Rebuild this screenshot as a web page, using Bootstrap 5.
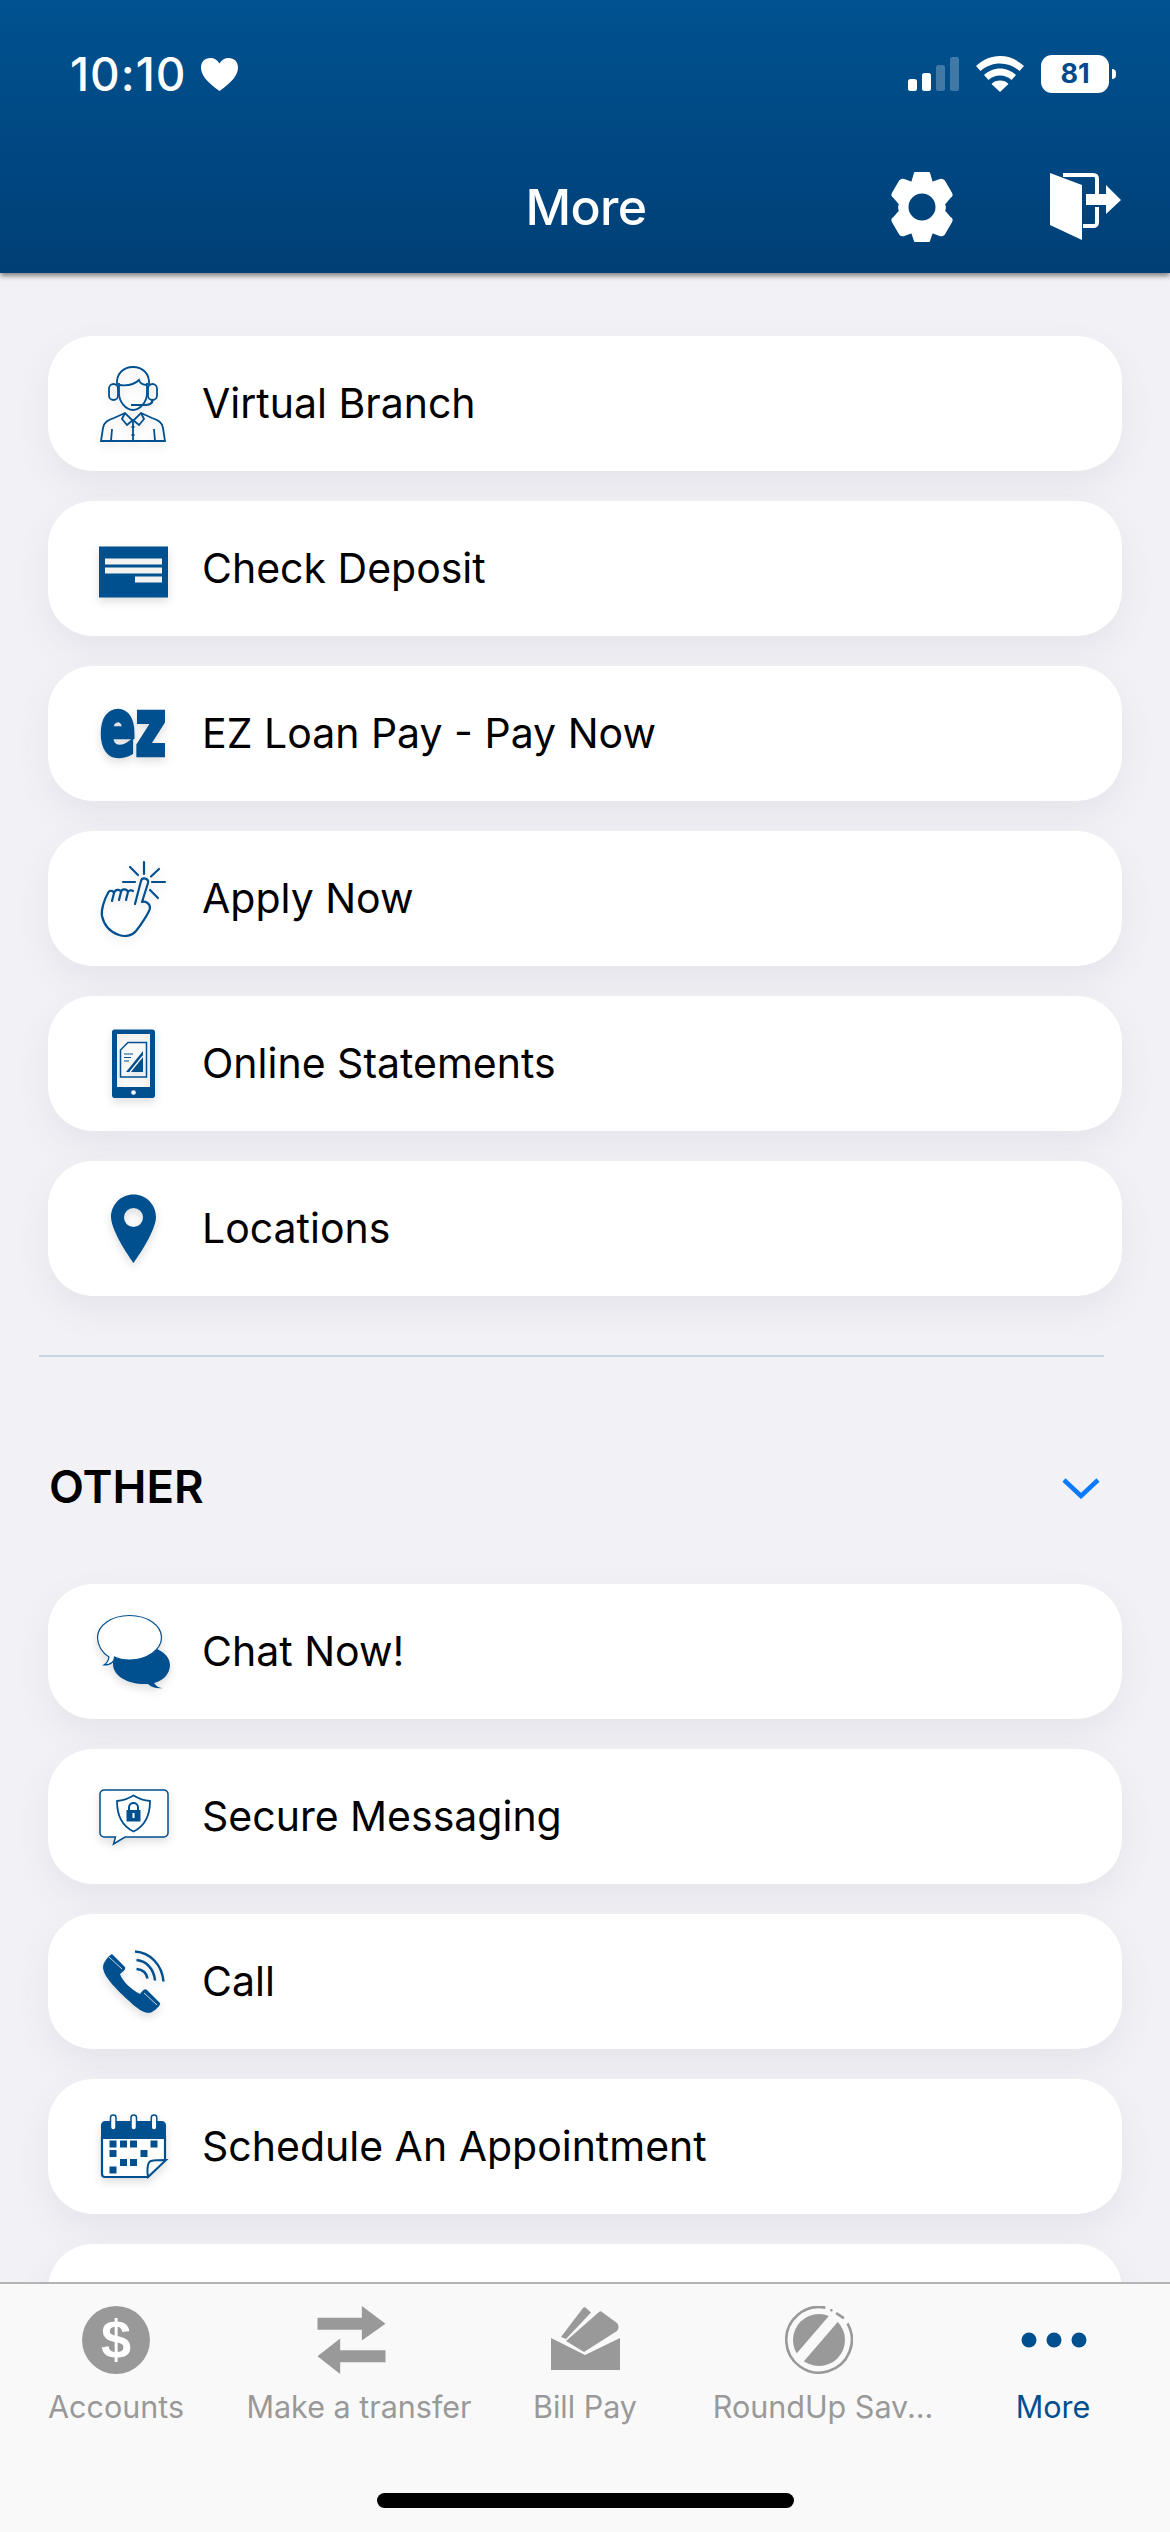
<!DOCTYPE html>
<html lang="en">
<head>
    <meta charset="UTF-8">
    <meta name="viewport" content="width=device-width, initial-scale=1.0">
    <title>More</title>
    <link href="https://cdn.jsdelivr.net/npm/bootstrap@5.3.2/dist/css/bootstrap.min.css" rel="stylesheet">
    <style>
        body {
            background: #f1f1f6;
            font-family: Inter, "Liberation Sans", sans-serif;
        }
        .app-shell {
            width: 1170px;
            height: 2532px;
            overflow: hidden;
        }
        .top-head {
            height: 273px;
            background: linear-gradient(180deg, #005290, #003f76);
            box-shadow: 0 3px 5px rgba(0, 0, 0, .45);
            z-index: 2;
        }
        .status-row {
            height: 148px;
            padding: 0 54px 0 70px;
        }
        .clock-text {
            font-size: 46px;
            font-weight: 500;
            letter-spacing: 1px;
            line-height: 1;
        }
        .heart-icon {
            margin-left: 14px;
        }
        .wifi-icon {
            margin: 0 17px;
        }
        .batt-box {
            width: 68px;
            height: 38px;
            border-radius: 11px;
            background: #fff;
            color: #004b8b;
            font-size: 27px;
            font-weight: 700;
            line-height: 38px;
            text-align: center;
        }
        .batt-nub {
            width: 4px;
            height: 10px;
            margin-left: 3px;
            border-radius: 0 5px 5px 0;
            background: #fff;
        }
        .nav-row {
            height: 120px;
            padding-bottom: 2px;
        }
        .nav-title {
            font-size: 50px;
            font-weight: 500;
            line-height: 1;
            letter-spacing: -.6px;
            margin-left: 2px;
        }
        .head-actions {
            right: 49px;
            top: 24px;
            gap: 96px;
        }
        .scroll-area {
            padding: 63px 48px 0;
            min-height: 0;
        }
        .menu-stack {
            gap: 30px;
        }
        .menu-row {
            height: 135px;
            flex: none;
            padding-left: 47px;
            gap: 31px;
            border-radius: 45px;
            background: #fff;
            box-shadow: 0 14px 34px rgba(90, 90, 120, .08);
            color: #000;
            font-size: 41px;
            text-decoration: none;
        }
        .menu-ico {
            width: 76px;
            height: 76px;
            flex: none;
            color: #00508f;
            overflow: visible;
            filter: drop-shadow(0 4px 4px rgba(0, 0, 0, .13));
        }
        .split-line {
            height: 2px;
            margin: 59px 18px 0 -9px;
            background: #c8d6e3;
        }
        .group-head {
            height: 227px;
            padding: 34px 22px 0 1px;
        }
        .group-title {
            font-size: 45.500px;
            font-weight: 600;
            color: #000;
        }
        .bottom-tabs {
            height: 250px;
            padding-right: 26px;
            background: #f9f9f9;
            border-top: 2px solid #b4b4b4;
            z-index: 2;
        }
        .tab-btn {
            padding-top: 22px;
            color: #999;
            font-size: 30.500px;
        }
        .tab-btn svg {
            display: block;
            margin-bottom: 15px;
        }
        .tab-w1 { width: 232px; }
        .tab-w2 { width: 254px; }
        .tab-w3 { width: 198px; }
        .tab-w4 { width: 278px; }
        .tab-w5 { width: 182px; }
        .tab-btn .tab-ico-left { margin-right: 16px; }
        .tab-btn .tab-ico-nudge { margin-right: 8px; }
        .tab-on { color: #00508f; }
        .tab-label { line-height: 36px; white-space: nowrap; }
        .home-pill {
            left: 377px;
            bottom: 24px;
            width: 417px;
            height: 15px;
            border-radius: 8px;
            background: #000;
        }
    </style>
</head>
<body>
    <div class="app-shell d-flex flex-column">

        <header class="top-head position-relative flex-shrink-0 text-white">
            <div class="status-row d-flex align-items-center">
                <span class="clock-text">10:10</span>
                <svg class="heart-icon" width="37" height="35" viewBox="0 0 39 35"><path fill="#fff" d="M19.500 35C6 25 0 18 0 10 0 4 4 0 10 0c4 0 7.500 2 9.500 6C21.500 2 25 0 29 0c6 0 10 4 10 10 0 8-6 15-19.500 25z"/></svg>
                <div class="ms-auto d-flex align-items-center">
                    <svg width="51" height="34" viewBox="0 0 51 34" fill="#fff">
                        <rect x="0" y="22" width="9" height="12" rx="2.500"/>
                        <rect x="14" y="16" width="9" height="18" rx="2.500"/>
                        <rect x="28" y="8" width="9" height="26" rx="2.500" opacity=".25"/>
                        <rect x="42" y="0" width="9" height="34" rx="2.500" opacity=".25"/>
                    </svg>
                    <svg class="wifi-icon" width="48" height="36" viewBox="0 0 48 36" fill="#fff">
                        <path d="M24 0C15 0 7 3.500 0 10l4.500 5C10 10 17 7.500 24 7.500S38 10 43.500 15L48 10C41 3.500 33 0 24 0z"/>
                        <path d="M24 12.500c-6 0-11.500 2.500-16 6.500l4.500 5c3-3 7-4.500 11.500-4.500s8.500 1.500 11.500 4.500l4.500-5c-4.500-4-10-6.500-16-6.500z"/>
                        <path d="M24 24.500c-3.500 0-6.500 1-8.500 3.500L24 36l8.500-8c-2-2.500-5-3.500-8.500-3.500z"/>
                    </svg>
                    <div class="batt-box">81</div>
                    <div class="batt-nub"></div>
                </div>
            </div>
            <div class="nav-row position-relative d-flex justify-content-center align-items-center">
                <span class="nav-title">More</span>
                <div class="head-actions position-absolute d-flex align-items-center">
                    <svg width="64" height="70" viewBox="0 0 64 70">
                        <path fill="#fff" stroke="#fff" stroke-width="2" stroke-linejoin="round" fill-rule="evenodd" d="M25 1h14l3 10 8-3c2-1 3 0 4 1l7 12c1 2 1 3-1 4l-6 7c1 2 1 5 0 7l6 7c2 1 2 2 1 4l-7 12c-1 1-2 2-4 1l-8-3-3 9H25l-3-9-8 3c-2 1-3 0-4-1L3 50c-1-2-1-3 1-4l6-7c-1-2-1-5 0-7l-6-7c-2-1-2-2-1-4l7-12c1-1 2-2 4-1l8 3zM32 20.500a14.500 14.500 0 1 0 0 29 14.500 14.500 0 0 0 0-29z"/>
                    </svg>
                    <svg width="71" height="68" viewBox="0 0 71 68">
                        <path fill="#fff" d="M0 0l32 12v55L0 52z"/>
                        <path fill="none" stroke="#fff" stroke-width="4" d="M13 2h30c3 0 4 1 4 4v15M47 34v15c0 3-1 4-4 4H33"/>
                        <path fill="#fff" d="M36 21h20v-9l15 15-15 14v-9H36z"/>
                    </svg>
                </div>
            </div>
        </header>

        <main class="scroll-area flex-grow-1 overflow-hidden">
            <div class="menu-stack d-flex flex-column">
                <a class="menu-row d-flex align-items-center" href="#">
                    <svg class="menu-ico" viewBox="0 0 76 76" fill="none" stroke="currentColor" stroke-width="1.800">
                        <path d="M22 19C21 7 29 1 38 1s17 6 16 18"/>
                        <path d="M24 17v10c0 9 7 17 14 17s14-8 14-17V17"/>
                        <path d="M24 19c8 1 15 0 20-5 1 3 4 5 8 5"/>
                        <rect x="14" y="18" width="9" height="16" rx="4.500"/>
                        <rect x="53" y="18" width="9" height="16" rx="4.500"/>
                        <path d="M57.500 34c0 3-3 5-8 5H36" stroke-width="2.200"/>
                        <path d="M6 75l2-13c1-6 5-8 11-10l11-5 8 8 8-8 11 5c6 2 10 4 11 10l2 13z"/>
                        <path d="M30 47l-3 6 5 6 6-5 6 5 5-6-3-6"/>
                        <path d="M38 55v20M17 63l-1 12M59 63l1 12"/>
                        <path d="M38 60v2M38 68v2" stroke-width="3"/>
                    </svg>
                    <span>Virtual Branch</span>
                </a>
                <a class="menu-row d-flex align-items-center" href="#">
                    <svg class="menu-ico" viewBox="0 0 76 76">
                        <rect x="4" y="15.500" width="69" height="51" fill="currentColor"/>
                        <rect x="10" y="27.500" width="57" height="6" fill="#f2f2f2"/>
                        <rect x="10" y="36.500" width="57" height="6" fill="#f2f2f2"/>
                        <rect x="40" y="45.500" width="27" height="6" fill="#f2f2f2"/>
                    </svg>
                    <span>Check Deposit</span>
                </a>
                <a class="menu-row d-flex align-items-center" href="#">
                    <svg class="menu-ico" viewBox="0 0 76 76">
                        <text x="5" y="59" font-family="DejaVu Sans" font-weight="700" font-size="78" fill="currentColor" stroke="currentColor" stroke-width="4.500" textLength="66" lengthAdjust="spacingAndGlyphs">ez</text>
                    </svg>
                    <span>EZ Loan Pay - Pay Now</span>
                </a>
                <a class="menu-row d-flex align-items-center" href="#">
                    <svg class="menu-ico" viewBox="0 0 76 76" fill="none" stroke="currentColor" stroke-width="2.200" stroke-linecap="round" stroke-linejoin="round">
                        <path d="M49 1v12M28 21h12M57 21h13M35 6l8 8M64 8l-8 7.500M63 37l-8-8"/>
                        <path d="M40 43l6-23c1-4 8-3 7 2l-6 19c3-1 8 1 8 6 0 3-9 17-14 23-4 5-11 6-17 4C15 71 9 64 7 55c-1-6 2-16 6-23 1-3 5-3 6 0l-2 8"/>
                        <path d="M19 32c1-4 6-4 7-1l-2 8M26 31c1-4 6-3 7 0l-2 8M33 31c1-2 4-2 5-1"/>
                    </svg>
                    <span>Apply Now</span>
                </a>
                <a class="menu-row d-flex align-items-center" href="#">
                    <svg class="menu-ico" viewBox="0 0 76 76">
                        <path fill="currentColor" fill-rule="evenodd" d="M19.500 3.500h38c1.500 0 2.500 1 2.500 2.500v63.500c0 1.500-1 2.500-2.500 2.500h-38c-1.500 0-2.500-1-2.500-2.500V6c0-1.500 1-2.500 2.500-2.500zM22 8v53h33V8z"/>
                        <circle cx="38.500" cy="66.500" r="2.300" fill="#fff"/>
                        <path fill="none" stroke="currentColor" stroke-width="1.500" d="M33 16.500h18.500v34.500H25.500V24z"/>
                        <path fill="currentColor" d="M31 46l17-21v21z"/>
                        <path stroke="#fff" stroke-width="1.200" d="M35 46l13-16"/>
                        <path stroke="currentColor" stroke-width="1.200" d="M29 28h9M29 31.500h7M29 35h5"/>
                    </svg>
                    <span>Online Statements</span>
                </a>
                <a class="menu-row d-flex align-items-center" href="#">
                    <svg class="menu-ico" viewBox="0 0 76 76">
                        <path fill="currentColor" fill-rule="evenodd" d="M38.500 3.500C26 3.500 16 13.500 16 26c0 15 22.500 46 22.500 46S61 41 61 26C61 13.500 51 3.500 38.500 3.500zm0 13.500a9.500 9.500 0 1 1 0 19 9.500 9.500 0 0 1 0-19z"/>
                    </svg>
                    <span>Locations</span>
                </a>
            </div>

            <div class="split-line"></div>

            <div class="group-head d-flex align-items-center justify-content-between">
                <span class="group-title">OTHER</span>
                <svg width="38" height="22" viewBox="0 0 38 22"><path fill="none" stroke="#0a7aff" stroke-width="4.500" d="M2 3l17 16L36 3"/></svg>
            </div>

            <div class="menu-stack d-flex flex-column">
                <a class="menu-row d-flex align-items-center" href="#">
                    <svg class="menu-ico" viewBox="0 0 76 76">
                        <path fill="currentColor" d="M18 50c0-10 12-18 28-18s29 8 29 19c0 9-7 16-16 18 2 3 5 5 9 5-5 1-11 0-15-4-20 1-35-8-35-20z"/>
                        <path fill="#fff" stroke="currentColor" stroke-width="1.200" d="M2.500 23.500c0-12 14-22 32-22s32 10 32 22-14 22.500-32 22.500c-6 0-11-1-15-3 0 4-3 8-10.500 8 3-2 4.500-4 5-8-7-4-11.500-12-11.500-19.500z"/>
                    </svg>
                    <span>Chat Now!</span>
                </a>
                <a class="menu-row d-flex align-items-center" href="#">
                    <svg class="menu-ico" viewBox="0 0 76 76">
                        <path fill="#fff" stroke="currentColor" stroke-width="1.500" d="M9 11h60c2 0 4 2 4 4v39c0 2-2 4-4 4H30l-11.500 7 2-7H9c-2 0-4-2-4-4V15c0-2 2-4 4-4z"/>
                        <path fill="none" stroke="currentColor" stroke-width="1.800" d="M38.500 16.500c5 3 10 5 16.500 5.500 0 14-5 25-16.500 30.500C27 47 22 36 22 22c6.500-.5 11.500-2.500 16.500-5.500z"/>
                        <path fill="currentColor" d="M31.500 31h14v11.500h-14z"/>
                        <path fill="none" stroke="currentColor" stroke-width="2" d="M34 31v-2.500c0-6 9-6 9 0V31"/>
                        <path stroke="#fff" stroke-width="2" d="M38.500 34v5"/>
                    </svg>
                    <span>Secure Messaging</span>
                </a>
                <a class="menu-row d-flex align-items-center" href="#">
                    <svg class="menu-ico" viewBox="0 0 76 76">
                        <path fill="currentColor" d="M17 10l13 13c1 2-1 4-5 7 2 6 10 15 20 20 3-4 5-6 7-4l13 13c1 2-4 7-8 9-5 3-14-2-24-12C21 45 8 32 8 23c0-4 5-11 9-13z"/>
                        <path stroke="#fff" stroke-width=".8" d="M14 13l13 12M49 49l13 12"/>
                        <path fill="none" stroke="currentColor" stroke-width="2.500" d="M40 7.500c15 1 27 13 28.500 30M41.500 16c10 1 17.500 9 18.500 20.500M41.500 25c6 .5 10 4 11 9.500"/>
                    </svg>
                    <span>Call</span>
                </a>
                <a class="menu-row d-flex align-items-center" href="#">
                    <svg class="menu-ico" viewBox="0 0 76 76">
                        <path fill="#fff" stroke="currentColor" stroke-width="2.200" d="M7 28v37c0 2 1 3 3 3h43l17-17V28z"/>
                        <path fill="currentColor" d="M6 30V16c0-2 2-4 4-4h57c2 0 4 2 4 4v14z"/>
                        <g fill="#fff" stroke="currentColor" stroke-width="1.500">
                            <rect x="15.500" y="6" width="5.500" height="15" rx="2.700"/>
                            <rect x="36" y="6" width="5.500" height="15" rx="2.700"/>
                            <rect x="56.300" y="6" width="5.500" height="15" rx="2.700"/>
                        </g>
                        <g fill="currentColor">
                            <rect x="14.500" y="31.500" width="7" height="7"/>
                            <rect x="25" y="31.500" width="7" height="7"/>
                            <rect x="35" y="31.500" width="7" height="7"/>
                            <rect x="55.500" y="31.500" width="7" height="7"/>
                            <rect x="14.500" y="41" width="7" height="7"/>
                            <rect x="45.500" y="41" width="7" height="7"/>
                            <rect x="25" y="50" width="7" height="7"/>
                            <rect x="35" y="50" width="7" height="7"/>
                            <rect x="14.500" y="57.500" width="7" height="7"/>
                        </g>
                        <path fill="#fff" stroke="currentColor" stroke-width="2" d="M53 68c-1-6-1-15 3-16 4-1 10-1 15-1z"/>
                    </svg>
                    <span>Schedule An Appointment</span>
                </a>
                <a class="menu-row d-flex align-items-center" href="#"></a>
            </div>
        </main>

        <nav class="bottom-tabs position-relative flex-shrink-0 d-flex">
            <div class="tab-btn tab-w1 d-flex flex-column align-items-center">
                <svg width="68" height="68" viewBox="0 0 68 68">
                    <circle cx="34" cy="34" r="34" fill="#999"/>
                    <text x="34" y="52" text-anchor="middle" font-family="Liberation Sans" font-weight="700" font-size="54" fill="#fff">$</text>
                </svg>
                <span class="tab-label">Accounts</span>
            </div>
            <div class="tab-btn tab-w2 d-flex flex-column align-items-center">
                <svg class="tab-ico-left" width="69" height="68" viewBox="0 0 69 69">
                    <path fill="#999" d="M0 12h45V0l24 18-24 17V24H0zM69 45H23V33L0 51l23 18V57h46z"/>
                </svg>
                <span class="tab-label">Make a transfer</span>
            </div>
            <div class="tab-btn tab-w3 d-flex flex-column align-items-center">
                <svg width="69" height="68" viewBox="0 0 69 68">
                    <path fill="#999" d="M0 32l34 17 35-17v32H0z"/>
                    <path fill="#999" d="M10 31L32 2c1-1 2-1 3 0l5 4.500L15 33zM15 35L48 6c1-1 2-1 3 0l15 11c2 2 2 6 0 8L33 46z"/>
                </svg>
                <span class="tab-label">Bill Pay</span>
            </div>
            <div class="tab-btn tab-w4 d-flex flex-column align-items-center">
                <svg class="tab-ico-nudge" width="68" height="68" viewBox="0 0 68 68">
                    <path fill="none" stroke="#999" stroke-width="2.600" d="M40.300 1.600A32.800 32.800 0 1 0 62.500 17.500"/>
                    <path fill="none" stroke="#999" stroke-width="2.600" stroke-linecap="round" d="M46.300 4.300h.1M52 7.700l6 4"/>
                    <circle cx="34" cy="34" r="26" fill="#999"/>
                    <path stroke="#f9f9f9" stroke-width="10.500" d="M50 11L13 54"/>
                </svg>
                <span class="tab-label">RoundUp Sav...</span>
            </div>
            <div class="tab-btn tab-w5 tab-on d-flex flex-column align-items-center">
                <svg width="68" height="68" viewBox="0 0 68 68" fill="#00508f">
                    <circle cx="10" cy="34" r="7.500"/>
                    <circle cx="35" cy="34" r="7.500"/>
                    <circle cx="60" cy="34" r="7.500"/>
                </svg>
                <span class="tab-label">More</span>
            </div>
            <div class="home-pill position-absolute"></div>
        </nav>
    </div>

    <script src="https://cdn.jsdelivr.net/npm/bootstrap@5.3.2/dist/js/bootstrap.bundle.min.js"></script>
</body>
</html>
